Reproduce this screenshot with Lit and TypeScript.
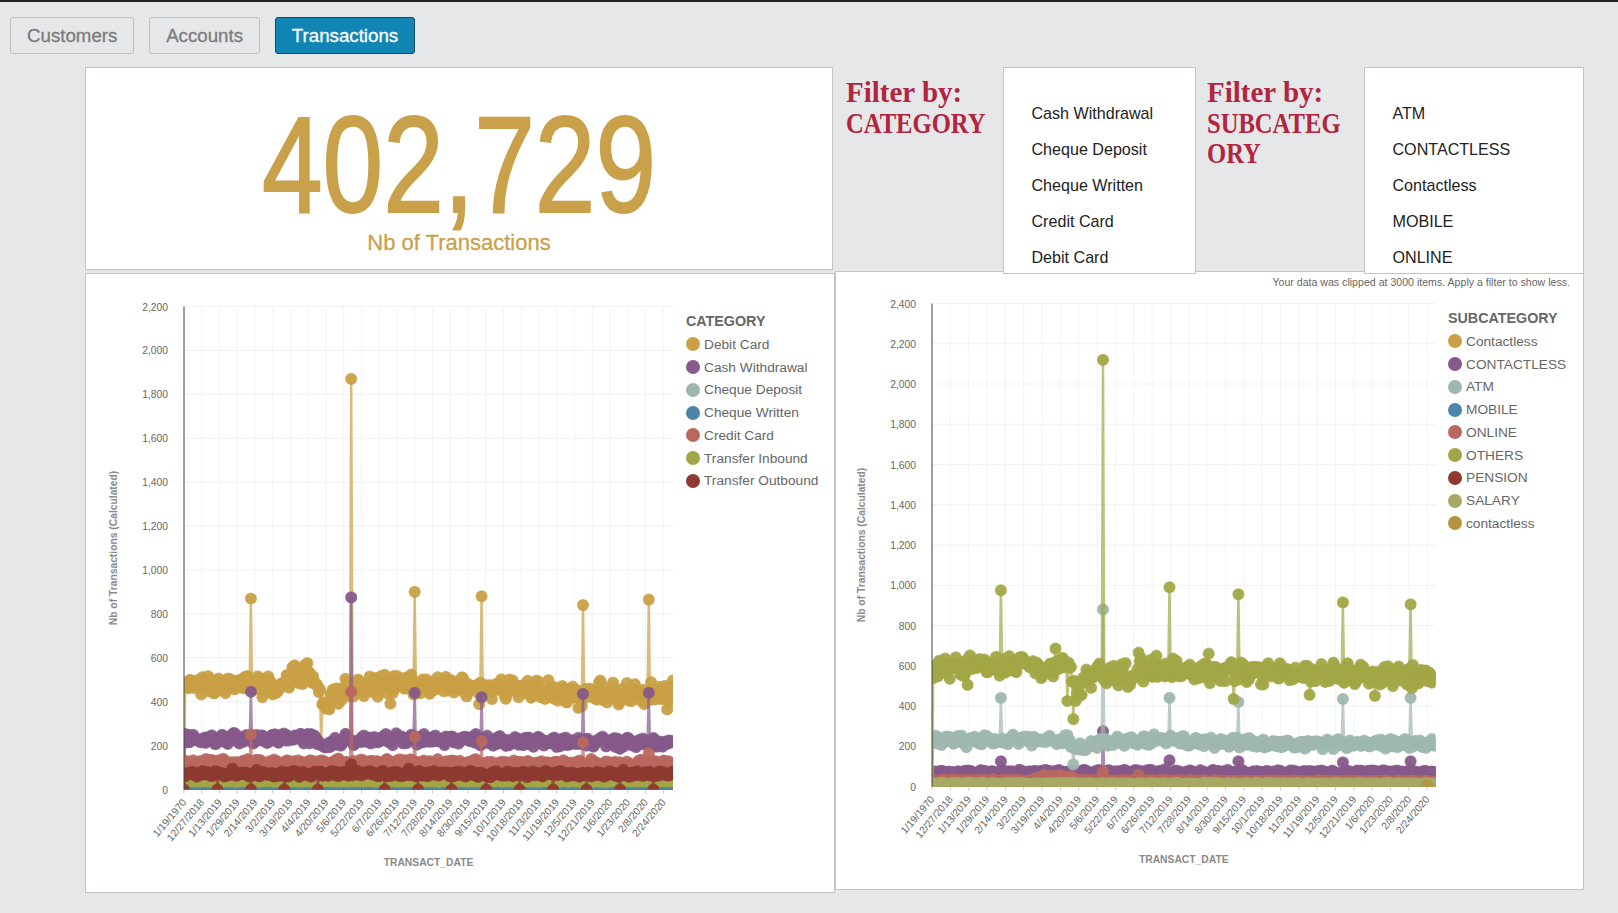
import { LitElement, html, css, svg } from 'lit';
import { customElement, property } from 'lit/decorators.js';

const COLORS = {
  gold: '#c9a046',
  purple: '#865a8a',
  sage: '#9fb7b0',
  blue: '#4c85a8',
  salmon: '#b9685f',
  olive: '#a2a646',
  maroon: '#8e3a32',
  salary: '#a6a965',
  brown: '#b7923f',
};

const DATES = [
  '1/19/1970', '12/27/2018', '1/13/2019', '1/29/2019', '2/14/2019', '3/2/2019', '3/19/2019',
  '4/4/2019', '4/20/2019', '5/6/2019', '5/22/2019', '6/7/2019', '6/26/2019', '7/12/2019',
  '7/28/2019', '8/14/2019', '8/30/2019', '9/15/2019', '10/1/2019', '10/18/2019', '11/3/2019',
  '11/19/2019', '12/5/2019', '12/21/2019', '1/6/2020', '1/23/2020', '2/8/2020', '2/24/2020',
];

const N = 425;

interface Series {
  name: string;
  color: string;
  values: number[];
}

interface ChartConfig {
  title: string;
  note?: string;
  yMax: number;
  tickStep: number; // px between date labels
  plot: { left: number; right: number; top: number; bottom: number };
  svgWidth: number;
  svgHeight: number;
  series: Series[];
}

function rng(seed: number) {
  return () => {
    seed = (seed + 0x6d2b79f5) | 0;
    let t = Math.imul(seed ^ (seed >>> 15), 1 | seed);
    t = (t + Math.imul(t ^ (t >>> 7), 61 | t)) ^ t;
    return ((t ^ (t >>> 14)) >>> 0) / 4294967296;
  };
}

function lerp(base: number[][], f: number) {
  for (let i = 1; i < base.length; i++) {
    if (f <= base[i][0]) {
      const [x0, y0] = base[i - 1];
      const [x1, y1] = base[i];
      return y0 + ((y1 - y0) * (f - x0)) / (x1 - x0);
    }
  }
  return base[base.length - 1][1];
}

// a slow wave gives the scalloped edge of the bands, a few points stray further out
function band(seed: number, base: number[][], amp: number, spikes: [number, number][] = []) {
  const r = rng(seed);
  const phase = r() * 6;
  const values: number[] = [];
  for (let i = 0; i < N; i++) {
    let v = lerp(base, i / (N - 1));
    v += amp * (0.3 * Math.sin((i * 2 * Math.PI) / 11 + phase) + 0.7 * (2 * r() - 1));
    if (r() < 0.07) v += amp * 0.7 * (2 * r() - 1);
    values.push(i === 0 ? 0 : Math.max(0, v));
  }
  for (const [f, v] of spikes) values[Math.round(f * (N - 1))] = v;
  return values;
}

// fractions of the plot width where the big daily spikes sit
const L = [67, 167, 231, 297, 399, 465].map((o) => o / 489);
const R = [69, 171, 238, 306, 411, 479].map((o) => o / 503.6);
const at = (xs: number[], ys: number[]) => xs.map((x, i) => [x, ys[i]] as [number, number]);

const maroonZeros: [number, number][] = Array.from({ length: 14 }, (_, k) => [
  (33.6 + k * 33.5) / 489,
  0,
]);

const leftSeries: Series[] = [
  {
    name: 'Debit Card',
    color: COLORS.gold,
    values: band(
      11,
      [[0, 478], [0.1, 485], [0.19, 468], [0.225, 530], [0.27, 525], [0.28, 385], [0.34, 465], [0.42, 482], [0.7, 460], [0.78, 440], [0.81, 415], [0.83, 445], [1, 435]],
      55,
      [...at(L, [870, 1870, 900, 880, 840, 865]), [0.2815, 205]],
    ),
  },
  {
    name: 'Cash Withdrawal',
    color: COLORS.purple,
    values: band(
      12,
      [[0, 230], [0.27, 236], [0.283, 190], [0.33, 226], [0.45, 230], [0.7, 220], [1, 210]],
      27,
      at(L, [445, 875, 440, 420, 435, 440]),
    ),
  },
  { name: 'Cheque Deposit', color: COLORS.sage, values: band(13, [[0, 110], [1, 105]], 8) },
  { name: 'Cheque Written', color: COLORS.blue, values: band(14, [[0, 1], [1, 1]], 1) },
  {
    name: 'Credit Card',
    color: COLORS.salmon,
    values: band(15, [[0, 122], [1, 116]], 20, at(L, [250, 445, 240, 220, 215, 165])),
  },
  { name: 'Transfer Inbound', color: COLORS.olive, values: band(16, [[0, 38], [1, 38]], 3) },
  {
    name: 'Transfer Outbound',
    color: COLORS.maroon,
    values: band(17, [[0, 72], [1, 70]], 14, [...maroonZeros, [L[1], 115], [0.46, 95], [0.1, 95]]),
  },
];

const rightSeries: Series[] = [
  { name: 'Contactless', color: COLORS.gold, values: band(21, [[0, 6], [1, 6]], 4) },
  {
    name: 'CONTACTLESS',
    color: COLORS.purple,
    values: band(22, [[0, 72], [1, 70]], 12, at(R, [125, 275, 130, 125, 120, 125])),
  },
  {
    name: 'ATM',
    color: COLORS.sage,
    values: band(
      23,
      [[0, 230], [0.27, 236], [0.285, 182], [0.33, 220], [0.45, 230], [0.7, 212], [1, 212]],
      27,
      [...at(R, [440, 880, 440, 420, 435, 440]), [0.28, 110]],
    ),
  },
  { name: 'MOBILE', color: COLORS.blue, values: band(24, [[0, 5], [1, 5]], 3) },
  {
    name: 'ONLINE',
    color: COLORS.salmon,
    values: band(
      25,
      [[0, 30], [0.2, 30], [0.22, 52], [0.27, 50], [0.29, 28], [1, 24]],
      6,
      [[R[1], 75], [0.41, 58]],
    ),
  },
  {
    name: 'OTHERS',
    color: COLORS.olive,
    values: band(
      26,
      [[0, 590], [0.1, 600], [0.22, 590], [0.27, 600], [0.285, 480], [0.33, 560], [0.5, 575], [0.7, 560], [1, 545]],
      62,
      [
        ...at(R, [975, 2120, 990, 955, 915, 905]),
        [0.27, 425], [0.285, 425], [0.28, 335], [0.245, 685], [0.41, 665], [0.55, 660],
        [0.6, 435], [0.445, 650], [0.07, 505], [0.39, 495], [0.75, 455], [0.88, 450],
      ],
    ),
  },
  { name: 'PENSION', color: COLORS.maroon, values: band(27, [[0, 8], [1, 8]], 4) },
  { name: 'SALARY', color: COLORS.salary, values: band(28, [[0, 14], [1, 13]], 4) },
  { name: 'contactless', color: COLORS.brown, values: [...Array(N - 8).fill(-40), 5, ...Array(7).fill(-40)] },
];

const LEFT: ChartConfig = {
  title: 'CATEGORY',
  yMax: 2200,
  tickStep: 17.75,
  plot: { left: 98, right: 587, top: 32.5, bottom: 515.5 },
  svgWidth: 600,
  svgHeight: 618,
  series: leftSeries,
};

const RIGHT: ChartConfig = {
  title: 'SUBCATEGORY',
  note: 'Your data was clipped at 3000 items. Apply a filter to show less.',
  yMax: 2400,
  tickStep: 18.34,
  plot: { left: 96, right: 599.5, top: 14.5, bottom: 497.5 },
  svgWidth: 612,
  svgHeight: 600,
  series: rightSeries,
};

@customElement('line-chart')
class LineChart extends LitElement {
  @property({ attribute: false }) config!: ChartConfig;

  static styles = css`
    :host {
      display: block;
      background: #fff;
      border: 1px solid #c3c4c6;
      font-family: 'Liberation Sans', Arial, sans-serif;
    }

    .note {
      height: 17px;
      padding-right: 13px;
      font-size: 10.6px;
      line-height: 20px;
      text-align: right;
      color: #666;
    }

    .body {
      display: flex;
    }

    svg {
      display: block;
      flex: none;
    }

    svg text {
      font-family: 'Liberation Sans', Arial, sans-serif;
      fill: #666;
    }

    .tick {
      font-size: 10.3px;
    }

    .axis-title {
      font-size: 10.3px;
      font-weight: 700;
      fill: #8a8a8a;
      text-anchor: middle;
    }

    .legend {
      padding-top: 37px;
      font-size: 13.7px;
      color: #666;
    }

    .noted .legend {
      padding-top: 19px;
    }

    .legend h4 {
      margin: 0 0 2px;
      font-size: 14.3px;
      line-height: 20px;
      font-weight: 700;
    }

    .legend div {
      display: flex;
      align-items: center;
      gap: 4px;
      height: 22.75px;
    }

    .legend i {
      width: 14px;
      height: 14px;
      border-radius: 50%;
    }
  `;

  render() {
    const c = this.config;
    return html`
      ${c.note ? html`<div class="note">${c.note}</div>` : ''}
      <div class="body ${c.note ? 'noted' : ''}">
        ${this.renderPlot(c)}
        <div class="legend">
          <h4>${c.title}</h4>
          ${c.series.map(
            (s) => html`<div><i style="background:${s.color}"></i>${s.name}</div>`,
          )}
        </div>
      </div>
    `;
  }

  private renderPlot(c: ChartConfig) {
    const { left, right, top, bottom } = c.plot;
    const sx = (i: number) => left + (i * (right - left)) / (N - 1);
    const sy = (v: number) => bottom - (v / c.yMax) * (bottom - top);
    const yTicks: number[] = [];
    for (let v = 0; v <= c.yMax; v += 200) yTicks.push(v);
    const clip = `plot-${c.title}`;
    const midY = (top + bottom) / 2;

    return html`<svg width=${c.svgWidth} height=${c.svgHeight}>
      <defs>
        ${svg`<clipPath id=${clip}><rect x=${left} y=${top - 30} width=${right - left} height=${bottom - top + 30}></rect></clipPath>`}
      </defs>
      ${yTicks.map(
        (v) => svg`
          <line x1=${left} x2=${right} y1=${sy(v)} y2=${sy(v)} stroke="#f1f1f1"></line>
          <text class="tick" x=${left - 16} y=${sy(v) + 4} text-anchor="end">${v.toLocaleString('en-US')}</text>`,
      )}
      ${DATES.map((d, k) => {
        const x = left + k * c.tickStep;
        return svg`
          <line x1=${x} x2=${x} y1=${top} y2=${bottom} stroke="#f3f3f3"></line>
          <line x1=${x} x2=${x} y1=${bottom} y2=${bottom + 4} stroke="#ccc"></line>
          <text class="tick" text-anchor="end" transform="translate(${x + 3} ${bottom + 13}) rotate(-50)">${d}</text>`;
      })}
      <g clip-path="url(#${clip})">
        ${c.series.map((s) => this.renderSeries(s, sx, sy))}
      </g>
      <line x1=${left} x2=${left} y1=${top} y2=${bottom} stroke="#444"></line>
      <text class="axis-title" transform="translate(${left - 67} ${midY}) rotate(-90)">Nb of Transactions (Calculated)</text>
      <text class="axis-title" x=${(left + right) / 2} y=${bottom + 76}>TRANSACT_DATE</text>
    </svg>`;
  }

  private renderSeries(s: Series, sx: (i: number) => number, sy: (v: number) => number) {
    const pts = s.values.map((v, i) => [sx(i), sy(v), v]);
    const visible = pts.filter((p) => p[2] >= 0);
    const d = 'M' + visible.map((p) => `${p[0].toFixed(1)} ${p[1].toFixed(1)}`).join('L');
    return svg`
      <g>
        <path d=${d} fill="none" stroke=${s.color} stroke-width="2.5" stroke-opacity="0.7"></path>
        ${visible.map(
          (p) => svg`<circle cx=${p[0].toFixed(1)} cy=${p[1].toFixed(1)} r="5.5" fill=${s.color} fill-opacity="0.95" stroke=${s.color} stroke-opacity="0.7" stroke-width="1.2"></circle>`,
        )}
      </g>`;
  }
}

@customElement('filter-box')
class FilterBox extends LitElement {
  @property() label = '';
  @property({ attribute: false }) items: string[] = [];

  static styles = css`
    :host {
      display: flex;
      align-items: flex-start;
    }

    .label {
      box-sizing: border-box;
      width: 168px;
      padding: 10px 0 0 11px;
      font-family: 'Liberation Serif', 'DejaVu Serif', serif;
      font-weight: 700;
      font-size: 29px;
      line-height: 30.5px;
      color: #b3243f;
    }

    .label span {
      display: block;
      width: 178px;
      font-size: 30px;
      overflow-wrap: anywhere;
      transform: scaleX(0.82);
      transform-origin: left;
    }

    ul {
      position: relative;
      z-index: 1;
      box-sizing: border-box;
      flex: 1;
      margin: 0;
      padding: 27px 0 0 27.5px;
      height: 207px;
      overflow: hidden;
      list-style: none;
      background: #fff;
      border: 1px solid #c3c4c6;
      font-family: 'Liberation Sans', Arial, sans-serif;
      font-size: 16.1px;
      color: #222;
    }

    li {
      height: 36px;
      line-height: 36px;
    }
  `;

  render() {
    return html`
      <div class="label">Filter by:<span>${this.label}</span></div>
      <ul>
        ${this.items.map((i) => html`<li>${i}</li>`)}
      </ul>
    `;
  }
}

@customElement('app-root')
class AppRoot extends LitElement {
  static styles = css`
    :host {
      display: block;
      box-sizing: border-box;
      height: 913px;
      overflow: hidden;
      border-top: 2px solid #222;
      background: #e6e7e9;
      font-family: 'Liberation Sans', Arial, sans-serif;
    }

    .tabs {
      display: flex;
      gap: 14.8px;
      padding: 15px 0 0 10px;
    }

    .tabs button {
      box-sizing: border-box;
      height: 37px;
      padding: 0 16px;
      border: 1px solid #bfc0c2;
      border-radius: 3px;
      background: #e6e7e9;
      font-family: inherit;
      font-size: 18.7px;
      color: #7b7c7e;
      -webkit-text-stroke: 0.3px currentColor;
    }

    .tabs button.active {
      background: #1185b3;
      border-color: #0c4a68;
      color: #fff;
    }

    .board {
      display: grid;
      grid-template-columns: 750px 749px;
      margin: 13px 0 0 85px;
    }

    .kpi {
      box-sizing: border-box;
      width: 748px;
      height: 203px;
      margin-bottom: 3px;
      background: #fff;
      border: 1px solid #c3c4c6;
      color: #c9a14a;
      text-align: center;
    }

    .kpi strong {
      display: block;
      margin-top: 30px;
      font-size: 138px;
      line-height: 132px;
      font-weight: 400;
      transform: scaleX(0.79);
      -webkit-text-stroke: 2px currentColor;
    }

    .kpi span {
      display: block;
      font-size: 22px;
      line-height: 26px;
      -webkit-text-stroke: 0.3px currentColor;
    }

    .filters {
      display: grid;
      grid-template-columns: 361px 388px;
      height: 206px;
    }

    .right line-chart {
      margin-top: -2px;
    }
  `;

  render() {
    return html`
      <div class="tabs">
        <button>Customers</button>
        <button>Accounts</button>
        <button class="active">Transactions</button>
      </div>
      <div class="board">
        <div>
          <div class="kpi">
            <strong>402,729</strong>
            <span>Nb of Transactions</span>
          </div>
          <line-chart .config=${LEFT}></line-chart>
        </div>
        <div class="right">
          <div class="filters">
            <filter-box
              label="CATEGORY"
              .items=${['Cash Withdrawal', 'Cheque Deposit', 'Cheque Written', 'Credit Card', 'Debit Card']}
            ></filter-box>
            <filter-box
              label="SUBCATEGORY"
              .items=${['ATM', 'CONTACTLESS', 'Contactless', 'MOBILE', 'ONLINE']}
            ></filter-box>
          </div>
          <line-chart .config=${RIGHT}></line-chart>
        </div>
      </div>
    `;
  }
}
